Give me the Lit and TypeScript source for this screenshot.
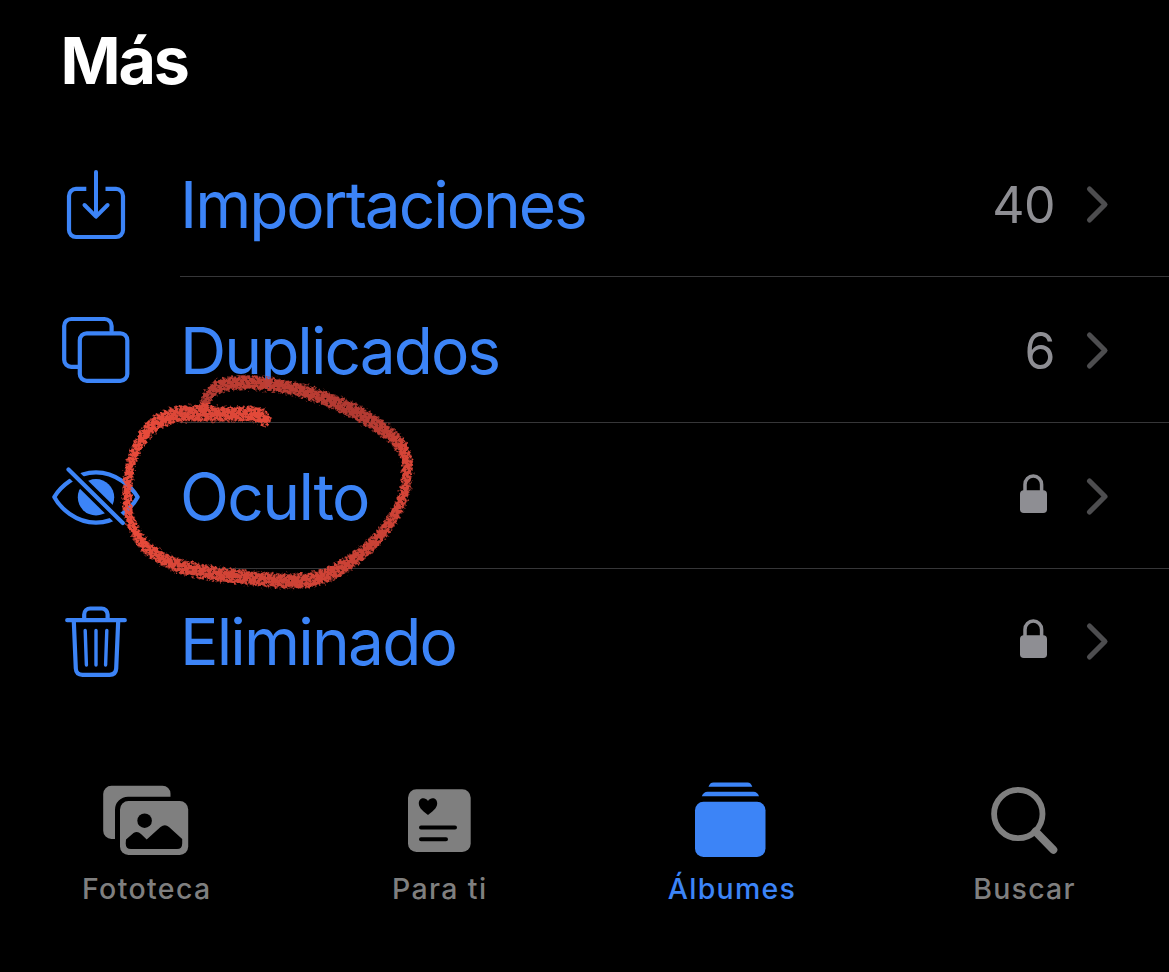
import { LitElement, html, svg, css } from "lit";
import { customElement } from "lit/decorators.js";

const importIcon = svg`
  <path d="M86.3 188.9H76a7 7 0 0 0-7 7V230a7 7 0 0 0 7 7H116a7 7 0 0 0 7-7V195.900a7 7 0 0 0-7-7H105.500" stroke-linecap="butt"/>
  <path d="M96 172V216.500M84.500 205L96 216.700L107.600 205" stroke-width="4"/>`;
const duplicateIcon = svg`
  <path d="M111.600 331V326a7 7 0 0 0-7-7H71.200a7 7 0 0 0-7 7V359.800a7 7 0 0 0 7 7H78"/>
  <rect x="79.800" y="333.300" width="47.500" height="47.600" rx="7"/>`;
const hiddenIcon = svg`
  <path d="M54.300 497C60 487 76 472.300 96 472.300S132 487 137.700 497C132 508 116 522.600 96 522.600S60 508 54.300 497Z"/>
  <circle cx="96" cy="497.300" r="18.200" fill="currentColor" stroke="none"/>
  <path d="M64 465L128 528" stroke="#000" stroke-width="11.500" stroke-linecap="butt"/>
  <path d="M68.500 469.500L122.800 523"/>`;
const trashIcon = svg`
  <path d="M67.200 620.200H124.800M84.200 619V614.500a6 6 0 0 1 6-6H101.600a6 6 0 0 1 6 6V619"/>
  <path d="M73.800 621L75.800 668.500Q76.200 674.800 82.500 674.800H109.500Q115.800 674.800 116.200 668.500L118.200 621"/>
  <path d="M85.200 630.500L86.400 665M96 630.500V665M106.800 630.500L105.600 665" stroke-width="3.400"/>`;

const rows = [
  { label: "Importaciones", icon: importIcon, count: "40", top: 131, cls: "imp" },
  { label: "Duplicados", icon: duplicateIcon, count: "6", top: 277, cls: "dup" },
  { label: "Oculto", icon: hiddenIcon, count: "", top: 423, cls: "ocu" },
  { label: "Eliminado", icon: trashIcon, count: "", top: 569, cls: "eli" },
];

const tabs = [
  {
    label: "Fototeca",
    cls: "t1",
    x: 0,
    w: 292,
    icon: svg`
      <path d="M111 785.700H162.500a8 8 0 0 1 8 8V796.800H128a13 13 0 0 0-13 13V839H111.500a8.300 8.300 0 0 1-8.300-8.300V794a8.300 8.300 0 0 1 8.300-8.300Z"/>
      <rect x="120" y="801" width="68.200" height="54" rx="8.500"/>
      <circle cx="144.600" cy="820.700" r="7.300" fill="#000"/>
      <path d="M126 839.500L133.500 833Q137.500 830.500 141 834L146.700 839.500L160.500 827Q165 823.500 169 827L182.200 839V843.500Q182.200 849 177 849H131Q125.700 849 125.700 843.500Z" fill="#000"/>`,
  },
  {
    label: "Para ti",
    cls: "t2",
    x: 292,
    w: 294,
    icon: svg`
      <rect x="408" y="789.300" width="62.700" height="62.700" rx="8.500"/>
      <path d="M428 815C424 812 418.800 808.300 418.800 803.600C418.800 797.300 425.500 797 428 801C430.500 797 437.200 797.300 437.200 803.600C437.200 808.300 432 812 428 815Z" fill="#000"/>
      <path d="M421 827.600H455M421 839.200H446" stroke="#000" stroke-width="4" stroke-linecap="round"/>`,
  },
  {
    label: "Álbumes",
    cls: "t3",
    x: 586,
    w: 292,
    icon: svg`
      <path d="M708.500 786.800Q709.800 782.500 713.500 782.500H747.500Q751 782.500 752.300 786.800ZM701.800 796.200Q703.500 791.700 707.500 791.700H753.500Q757.500 791.700 759 796.200Z"/>
      <rect x="695" y="801.700" width="70.500" height="55.300" rx="8.500"/>`,
  },
  {
    label: "Buscar",
    cls: "t4",
    x: 878,
    w: 291,
    icon: svg`
      <circle cx="1018.300" cy="814" r="24.200" fill="none" stroke="currentColor" stroke-width="5.800"/>
      <path d="M1035.500 831.500L1053.300 849.800" stroke="currentColor" stroke-width="8" stroke-linecap="round"/>`,
  },
];

/* Brush samples: x, y, stroke width, brightness */
const brush: number[][] = [
  [204, 403, 8, 0.3], [212, 391, 11, 0.3], [227, 384, 13, 0.4], [258, 383, 13, 0.45], [290, 388, 12.500, 0.4],
  [318, 396, 13, 0.4], [350, 409, 14, 0.3], [377, 425, 13.500, 0.35], [397, 441, 12, 0.5], [406, 457, 10.500, 0.75],
  [407, 474, 9.500, 0.8], [403, 497, 9.500, 0.75], [387, 527, 11, 0.65], [363, 552, 12, 0.6], [337, 570, 13.500, 0.65],
  [310, 580, 14, 0.7], [283, 581, 14, 0.65], [250, 578, 13.500, 0.7], [210, 573, 14, 0.75], [177, 565, 13, 0.8],
  [151, 551, 11.500, 0.9], [136, 533, 9.500, 1], [128, 510, 8.500, 1], [128, 483, 8.500, 1], [133, 457, 9, 1],
  [146, 433, 11.500, 1], [163, 419, 14, 0.95], [185, 413.500, 15.500, 0.85], [220, 414, 14.500, 0.85], [253, 414, 14, 0.9],
  [260, 416, 14, 0.95], [266, 421, 10, 0.95],
];

function brushDabs() {
  const out = [];
  const spline = (a: number, b: number, c: number, d: number, t: number) =>
    0.5 * (2 * b + (c - a) * t + (2 * a - 5 * b + 4 * c - d) * t * t + (3 * b - a - 3 * c + d) * t * t * t);
  for (let i = 0; i < brush.length - 1; i++) {
    const a = brush[Math.max(0, i - 1)], b = brush[i], c = brush[i + 1], d = brush[Math.min(brush.length - 1, i + 2)];
    for (let s = 0; s < 12; s++) {
      const t = s / 12;
      const [x, y, w, k] = [0, 1, 2, 3].map((n) => spline(a[n], b[n], c[n], d[n], t));
      const fill = `rgb(${Math.round(158 + 78 * k)},${Math.round(52 + 24 * k)},${Math.round(46 + 14 * k)})`;
      out.push(svg`<circle cx=${x} cy=${y} r=${w / 2 + 1} fill=${fill}></circle>`);
    }
  }
  return out;
}

@customElement("app-root")
export class AppRoot extends LitElement {
  static styles = css`
    :host {
      display: block;
      position: relative;
      width: 1169px;
      height: 972px;
      overflow: hidden;
      background: #000;
      color: #3c84f7;
      font-family: Inter, "Liberation Sans", sans-serif;
    }
    .screen { display: flex; flex-direction: column; height: 100%; }
    .title {
      margin: 0;
      height: 131px;
      box-sizing: border-box;
      padding: 22px 0 0 60.500px;
      font-size: 64.500px;
      line-height: 78px;
      font-weight: 650;
      letter-spacing: -2.200px;
      color: #fff;
    }
    .row { display: grid; grid-template-columns: 180px 1fr auto 115px; height: 146px; position: relative; }
    .row:not(:last-child)::after {
      content: "";
      position: absolute;
      left: 180px;
      right: 0;
      bottom: 0;
      height: 1px;
      background: #363638;
    }
    svg { display: block; }
    .glyph { fill: none; stroke: currentColor; stroke-width: 4.200; stroke-linecap: round; stroke-linejoin: round; }
    .label { font-size: 64px; line-height: 148px; white-space: nowrap; }
    .imp { letter-spacing: -2.050px; }
    .dup { letter-spacing: -1.950px; }
    .ocu { letter-spacing: -1.600px; }
    .eli { letter-spacing: -1.800px; line-height: 146px; }
    .count { color: #8e8e93; font-size: 50px; line-height: 148px; letter-spacing: -0.500px; margin-right: -1px; }
    .lock { color: #8e8e93; }
    .tabs { display: grid; grid-template-columns: 292px 294px 292px 291px; height: 257px; color: #7f7f7f; }
    .tab { display: flex; flex-direction: column; align-items: center; }
    .tab svg { fill: currentColor; }
    .tab span { font-size: 28.500px; line-height: 36px; font-weight: 500; letter-spacing: 1.350px; margin-top: 5px; padding-left: 1.500px; }
    .t3 span { padding-left: 0; letter-spacing: 1.250px; }
    .t4 span { padding-left: 2px; letter-spacing: 1.250px; }
    .t3 { color: #3c84f7; }
    .ink { position: absolute; left: 0; top: 0; pointer-events: none; }
  `;

  private status(count: string, dy: number) {
    if (count) return html`<span class="count">${count}</span>`;
    return html`<svg class="lock" width="54" height="146" viewBox="1000 ${dy} 54 146">
      <rect x="1020" y="67.300" width="27" height="22.800" rx="3.800" fill="currentColor"/>
      <path d="M1025 69V61.500a8.300 8.500 0 0 1 16.600 0V69" fill="none" stroke="currentColor" stroke-width="3.500"/>
    </svg>`;
  }

  private chevron(dy: number) {
    return html`<svg width="115" height="146" viewBox="1054 ${dy} 115 146">
      <path d="M1089.500 58L1105 73.500L1089.500 89" fill="none" stroke="#4d4d4f" stroke-width="5.100" stroke-linecap="round" stroke-linejoin="round"/>
    </svg>`;
  }

  render() {
    return html`
      <main class="screen">
        <h1 class="title">Más</h1>
        <section>
          ${rows.map((r, i) => {
            const dy = i === 3 ? 1 : 0;
            return html`<div class="row">
              <svg class="glyph" width="180" height="146" viewBox="0 ${r.top} 180 146">${r.icon}</svg>
              <span class="label ${r.cls}">${r.label}</span>
              ${this.status(r.count, dy)}
              ${this.chevron(dy)}
            </div>`;
          })}
        </section>
        <nav class="tabs">
          ${tabs.map(
            (t) => html`<div class="tab ${t.cls}">
              <svg width=${t.w} height="151" viewBox="${t.x} 715 ${t.w} 151">${t.icon}</svg>
              <span>${t.label}</span>
            </div>`
          )}
        </nav>
      </main>
      <svg class="ink" width="440" height="620" viewBox="0 0 440 620">
        <defs>
          <filter id="crayon" filterUnits="userSpaceOnUse" x="100" y="360" width="340" height="250" color-interpolation-filters="sRGB">
            <feTurbulence type="fractalNoise" baseFrequency="0.36" numOctaves="3" seed="7" result="n"/>
            <feColorMatrix in="n" type="matrix" values="0 0 0 0 0  0 0 0 0 0  0 0 0 0 0  1 0 0 0 0" result="grain"/>
            <feColorMatrix in="SourceGraphic" type="matrix" values="0 0 0 0 0  0 0 0 0 0  0 0 0 0 0  0 0 0 1 0" result="a"/>
            <feGaussianBlur in="a" stdDeviation="2" result="soft"/>
            <feComposite in="soft" in2="grain" operator="arithmetic" k1="0" k2="2.600" k3="3.400" k4="-2.950" result="mask"/>
            <feMorphology in="SourceGraphic" operator="dilate" radius="2" result="wide"/>
            <feComposite in="wide" in2="mask" operator="in" result="ink"/>
            <feGaussianBlur in="ink" stdDeviation="0.400"/>
          </filter>
        </defs>
        <g filter="url(#crayon)" opacity="0.980">${brushDabs()}</g>
      </svg>`;
  }
}
